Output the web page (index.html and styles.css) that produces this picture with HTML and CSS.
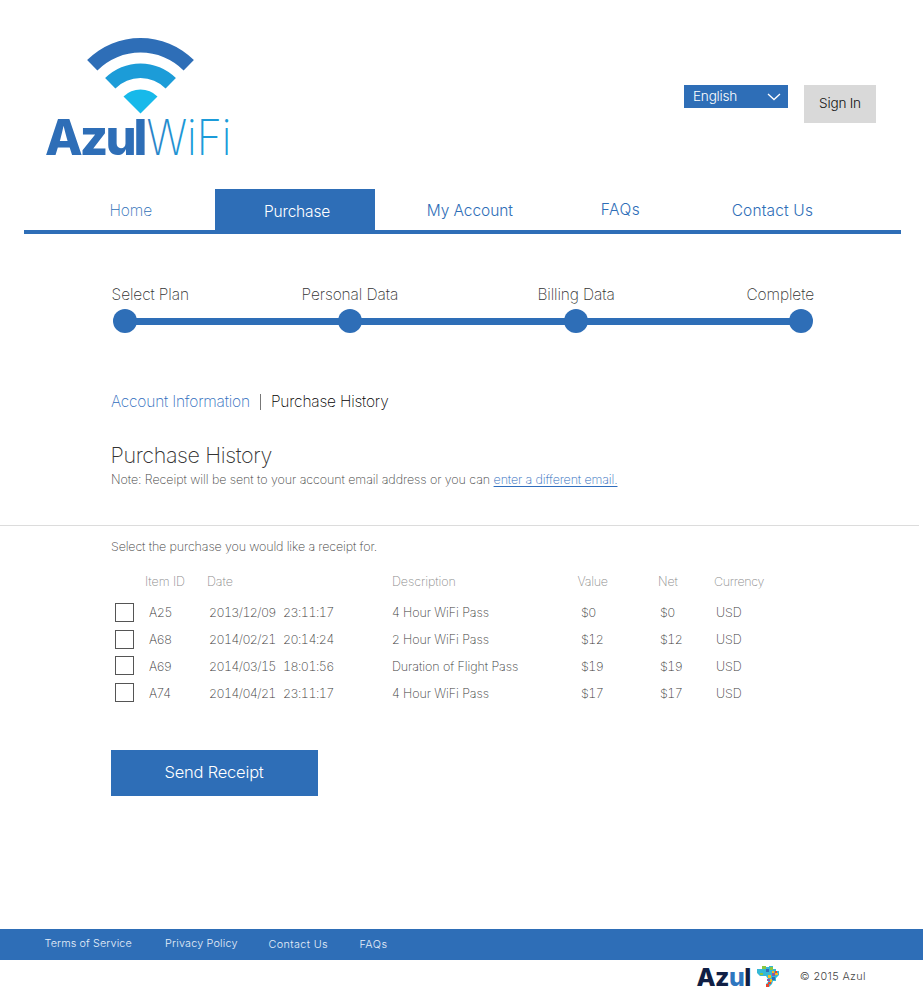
FILE: index.html
```html
<!DOCTYPE html>
<html lang="en">
<head>
<meta charset="utf-8">
<title>Azul WiFi – Purchase History</title>
<link rel="stylesheet" href="styles.css">
</head>
<body>
<header class="top">
  <svg class="logo" width="198" height="136" viewBox="43 34 198 136" role="img" aria-label="Azul WiFi">
    <defs><linearGradient id="wifi" x1="0" x2="1"><stop offset="0" stop-color="#2d7fc4"/><stop offset=".5" stop-color="#1c9bd9"/></linearGradient></defs>
    <path fill="#2e6eb7" d="M87.1 60.1A75.5 75.5 0 0 1 193.9 60.1L183.6 70.4A61 61 0 0 0 97.4 70.4Z"/>
    <path fill="#1c9cd8" d="M105.1 78.1A50 50 0 0 1 175.9 78.1L165.6 88.4A35.5 35.5 0 0 0 115.4 88.4Z"/>
    <path fill="#17b9ea" d="M123.5 96.5A24 24 0 0 1 157.5 96.5L140.5 113.5Z"/>
    <text class="logo-bold" x="45" y="154.7">Azul</text>
    <text class="logo-thin" x="146.5" y="154.7" textLength="85" lengthAdjust="spacingAndGlyphs" fill="url(#wifi)">WiFi</text>
  </svg>
  <div class="tools">
    <div class="language">English
      <svg width="14" height="8" viewBox="0 0 14 8"><path d="M1 1l6 5.6L13 1" fill="none" stroke="#fff" stroke-width="1.3"/></svg>
    </div>
    <a class="sign-in">Sign In</a>
  </div>
</header>

<nav class="nav">
  <a class="home">Home</a>
  <a class="active">Purchase</a>
  <a class="account">My Account</a>
  <a class="faqs">FAQs</a>
  <a class="contact">Contact Us</a>
</nav>

<main>
  <section class="steps">
    <div class="step-labels">
      <span class="plan">Select Plan</span><span class="personal">Personal Data</span><span class="billing">Billing Data</span><span>Complete</span>
    </div>
    <div class="track"><i></i><b></b><i></i><b></b><i></i><b></b><i></i></div>
  </section>

  <div class="tabs"><a>Account Information</a><span class="bar"></span><span class="current">Purchase History</span></div>
  <h1>Purchase History</h1>
  <p class="note"><span>Note: Receipt will be sent to your account email address or you can</span> <a>enter a different email.</a></p>
  <hr>
  <p class="prompt">Select the purchase you would like a receipt for.</p>

  <div class="purchases">
    <div class="row head"><span></span><span>Item ID</span><span>Date</span><span></span><span>Description</span><span class="value">Value</span><span>Net</span><span class="currency">Currency</span></div>
    <div class="row"><i class="box"></i><span>A25</span><span class="date">2013/12/09</span><span class="time">23:11:17</span><span>4 Hour WiFi Pass</span><span class="sum">$0</span><span class="sum">$0</span><span>USD</span></div>
    <div class="row"><i class="box"></i><span>A68</span><span class="date">2014/02/21</span><span class="time">20:14:24</span><span>2 Hour WiFi Pass</span><span class="sum">$12</span><span class="sum">$12</span><span>USD</span></div>
    <div class="row"><i class="box raised"></i><span>A69</span><span class="date">2014/03/15</span><span class="time">18:01:56</span><span>Duration of Flight Pass</span><span class="sum">$19</span><span class="sum">$19</span><span>USD</span></div>
    <div class="row"><i class="box raised"></i><span>A74</span><span class="date">2014/04/21</span><span class="time">23:11:17</span><span>4 Hour WiFi Pass</span><span class="sum">$17</span><span class="sum">$17</span><span>USD</span></div>
  </div>
  <a class="send">Send Receipt</a>
</main>

<footer>
  <div class="links"><a class="terms">Terms of Service</a><a class="privacy">Privacy Policy</a><a class="f-contact">Contact Us</a><a class="f-faqs">FAQs</a></div>
  <div class="legal">
    <svg class="brand" width="84" height="28" viewBox="696 963 84 28" role="img" aria-label="Azul">
      <text class="brand-text" x="696.5" y="986.2">Az<tspan fill="#2e76bf">u</tspan>l</text>
      <path fill="#35b8d6" d="M757 969h5v-3h4v1h3v-1h4v3h3v2h3v4l-3 3v3h-3l-1 3-3 3h-3v-3l2-2v-3l-2-3h-6l-3-3z"/>
      <path fill="#8cc63f" d="M762 966h4v3h-4zM770 967h3v3h-3zM760 973h3v2h-3z"/>
      <path fill="#2e6eb7" d="M766 969h3v3h-3zM772 977h3v3h-3z"/>
      <path fill="#f9b91f" d="M772 971h2v2h-2zM775 973h3v2h-3zM768 975h3v3h-3zM770 979h2v3h-2z"/>
      <path fill="#8b5aa5" d="M772 973h3v3h-3zM767 979h3v2h-3z"/>
      <path fill="#e8452e" d="M775 971h2v2h-2zM768 982h3v2h-3zM766 984h3v3h-3z"/>
    </svg>
    <span>© 2015 Azul</span>
  </div>
</footer>
</body>
</html>
```
FILE: styles.css
```css
* { box-sizing: border-box; }
body { margin: 0; background: #fff; color: #333; font: 250 15.5px/20px Inter, "Liberation Sans", sans-serif; letter-spacing: -0.1px; height: 994px; display: flex; flex-direction: column; }
p, h1 { margin: 0; font-weight: 250; }
svg { display: block; }

.top { height: 189px; padding: 34px 47px 0 43px; display: flex; justify-content: space-between; align-items: flex-start; }
.logo-bold { font: 800 49px Inter, sans-serif; fill: #2e6eb7; letter-spacing: -2.9px; }
.logo-thin { font: 200 49px Inter, sans-serif; letter-spacing: 0; }
.tools { display: flex; gap: 16px; padding-top: 51px; align-items: flex-start; font-size: 13.6px; letter-spacing: -0.22px; font-weight: 280; }
.language { width: 104px; height: 23px; line-height: 23px; padding: 0 7px 0 9px; background: #2e6eb7; color: #fff; display: flex; align-items: center; justify-content: space-between; }
.sign-in { width: 72px; height: 38px; line-height: 37px; background: #d9d9d9; text-align: center; color: #111; }

.nav { height: 45px; margin: 0 22px 0 24px; border-bottom: 4px solid #2e6eb7; display: grid; grid-template-columns: 191px 160px 190px 130px 1fr; color: #2e6eb7; line-height: 43px; }
.nav .home { padding-left: 85.5px; }
.nav .active { background: #2e6eb7; color: #fff; line-height: 45px; padding-left: 49px; letter-spacing: -0.18px; font-weight: 280; }
.nav .account { padding-left: 51.7px; letter-spacing: -.06px; }
.nav .faqs { padding-left: 35.7px; line-height: 41px; letter-spacing: .55px; }
.nav .contact { padding-left: 36.7px; letter-spacing: .15px; }
.nav .account, .nav .faqs, .nav .contact { font-weight: 300; }

.steps { margin: 51px 109px 0 111px; }
.step-labels { display: grid; grid-template-columns: 190.5px 236px 1fr auto; }
.step-labels .plan { padding-left: .6px; }
.step-labels .billing { letter-spacing: -0.12px; }
.track { height: 24px; margin: 4px 1px 0 2px; display: flex; align-items: center; }
.track i { width: 24px; height: 24px; border-radius: 50%; background: #2e6eb7; margin: 0 -1px; }
.track i:first-child { margin-left: 0; }
.track i:last-child { margin-right: 0; }
.track b { flex: 1; height: 7px; background: #2e6eb7; }

.tabs { margin: 59px 0 0 111px; display: flex; align-items: center; letter-spacing: -0.2px; }
.tabs a { color: #2f6dbd; width: 149px; }
.tabs .bar { width: 1px; height: 16px; background: #777; margin-right: 10px; }
.tabs .current { color: #000; }
h1 { margin: 28px 0 0 110.5px; font-size: 21.5px; line-height: 30px; letter-spacing: -0.37px; }
.note { margin: 0 0 0 111px; font-size: 12.5px; letter-spacing: -0.08px; color: #444; display: flex; gap: 3.5px; }
.note a { color: #2f6dbd; text-decoration: underline; text-underline-offset: 2px; text-decoration-thickness: 1px; letter-spacing: -0.14px; }
hr { border: 0; height: 1px; background: #dcdcdc; margin: 35px 4px 0 0; }
.prompt { margin: 11px 0 0 111px; font-size: 12.5px; letter-spacing: -0.14px; color: #444; }

.purchases { margin: 11px 0 0 115px; font-size: 12.5px; letter-spacing: -0.08px; color: #3c3c3c; }
.row { display: grid; grid-template-columns: 34px 60px 74px 109px 189px 79px 56px 70px; height: 27px; align-items: center; }
.head { height: 27px; grid-template-columns: 30px 62px 73px 112px 185.5px 80.5px 56px 70px; color: #8c8c8c; margin-bottom: 4px; }
.head .value { letter-spacing: -0.3px; }
.head .currency { letter-spacing: -0.35px; }
.box { width: 19px; height: 19px; border: 1px solid #555; }
.box.raised { margin-bottom: 2px; }
.date, .time, .sum { font-variant-numeric: tabular-nums; }
.date { letter-spacing: -0.62px; }
.time { letter-spacing: -0.55px; }
.sum { letter-spacing: -0.6px; }
.send { display: block; margin: 43px 0 0 111px; width: 207px; height: 46px; line-height: 45px; background: #2e6eb7; color: #fff; text-align: center; font-size: 16.5px; letter-spacing: -0.2px; font-weight: 300; padding-right: 1px; }

footer { margin-top: auto; height: 65px; font-size: 10.8px; letter-spacing: .2px; font-weight: 300; }
.links { height: 31px; line-height: 30px; padding-left: 44.5px; background: #2e6eb7; color: #e6eefa; display: flex; }
.terms { width: 120.5px; letter-spacing: .12px; }
.privacy { width: 103.5px; }
.f-contact { width: 91px; letter-spacing: .38px; line-height: 31px; }
.f-faqs { letter-spacing: .5px; line-height: 31px; }
.legal { display: flex; align-items: center; height: 34px; padding: 0 57px 0 696px; justify-content: space-between; color: #444; letter-spacing: .4px; }
.brand-text { font: 800 24.8px Inter, sans-serif; fill: #101f45; letter-spacing: -.5px; }
```
